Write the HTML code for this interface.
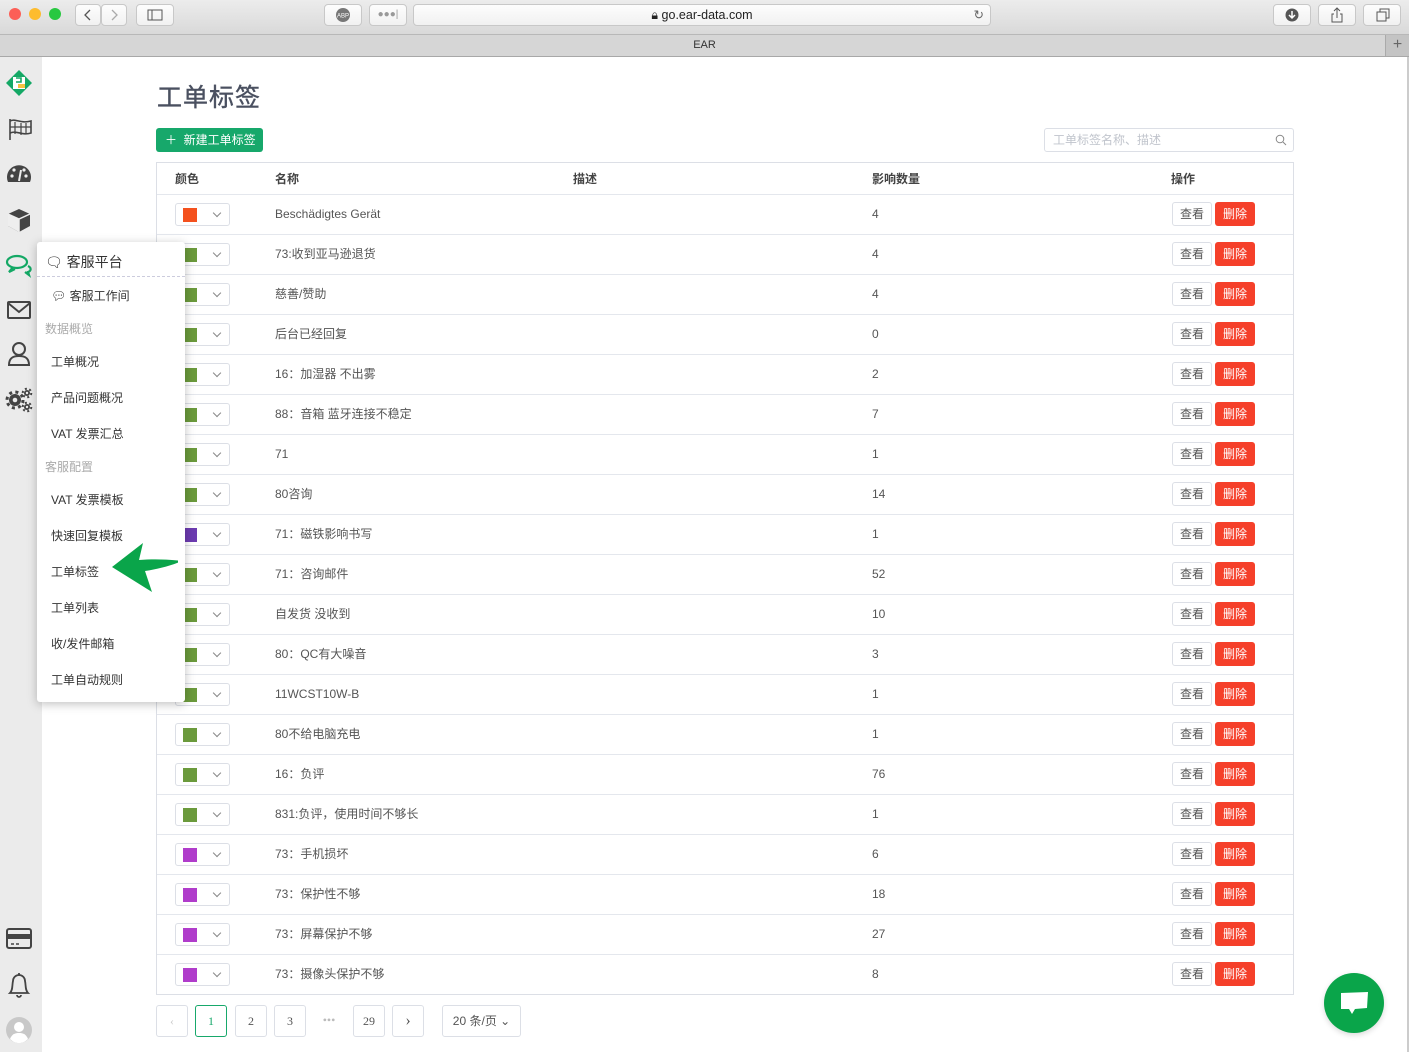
<!DOCTYPE html>
<html><head><meta charset="utf-8"><style>
*{margin:0;padding:0;box-sizing:border-box}
body{width:1409px;height:1052px;overflow:hidden;background:#fff;font-family:"Liberation Sans","Noto Sans CJK SC",sans-serif;color:#444;position:relative;font-size:12px}
.abs{position:absolute}
#top{left:0;top:0;width:1409px;height:34px;background:linear-gradient(#ececec,#d9d9d9)}
#tab{left:0;top:34px;width:1409px;height:23px;background:#d6d6d6;border-top:1px solid #b8b8b8;border-bottom:1px solid #a8a8a8;text-align:center;font-size:11px;line-height:21px;color:#333}
.tb{position:absolute;top:4px;height:22px;background:linear-gradient(#fdfdfd,#f1f1f1);border:1px solid #c8c8c8;border-radius:4px}
.dot{position:absolute;top:8px;width:12px;height:12px;border-radius:6px}
#side{left:0;top:57px;width:42px;height:995px;background:#ebebeb}
#rb{left:1407px;top:57px;width:2px;height:995px;background:#ccc}
h1{position:absolute;left:157px;top:78px;font-size:25px;font-weight:normal;color:#4a5060;letter-spacing:1px;-webkit-text-stroke:0.4px #4a5060}
#add{left:156px;top:128px;width:107px;height:24px;background:#17a86b;border-radius:3px;color:#fff;font-size:12px;line-height:24px;padding-left:9px}
#search{left:1044px;top:128px;width:250px;height:24px;border:1px solid #dcdfe6;border-radius:3px;color:#c0c4cc;font-size:12px;line-height:22px;padding-left:8px}
#tbl{left:156px;top:162px;width:1138px;height:833px;border:1px solid #dcdfe6}
.r{position:absolute;left:0;width:1136px;height:40px;border-top:1px solid #e4e7ed;font-size:12px;line-height:39px;color:#555}
.r span{position:absolute}
.sel{position:absolute;left:18px;top:8px;width:55px;height:23px;border:1px solid #dcdfe6;border-radius:3px}
.sw{position:absolute;left:7px;top:4px;width:14px;height:14px}
.chev{position:absolute;left:38px;top:6px;width:6px;height:6px;border-right:1px solid #888;border-bottom:1px solid #888;transform:rotate(45deg)}
.v{position:absolute;left:1015px;top:7px;width:40px;height:24px;border:1px solid #dcdfe6;border-radius:3px;line-height:22px;text-align:center;color:#555;background:#fff}
.d{position:absolute;left:1058px;top:7px;width:40px;height:24px;background:#f5402a;border-radius:3px;line-height:24px;text-align:center;color:#fff}
.hd{position:absolute;top:0;font-weight:bold;line-height:32px;color:#444}
.pg{position:absolute;top:1005px;width:32px;height:32px;border:1px solid #dcdfe6;border-radius:3px;text-align:center;line-height:30px;font-family:"Liberation Serif",serif;font-size:12px;color:#555}
#menu{left:37px;top:242px;width:148px;height:460px;background:#fff;box-shadow:0 2px 10px rgba(0,0,0,.25);border-radius:3px}
#menu div{position:absolute;left:14px;font-size:12px;color:#333}
#menu .g{color:#aaa;left:8px}
#chat{left:1324px;top:973px;width:60px;height:60px;border-radius:30px;background:#0aa54a;box-shadow:0 2px 6px rgba(0,0,0,.15)}
</style></head><body>
<div id="top" class="abs">
<div class="dot" style="left:9px;background:#fc5f57"></div><div class="dot" style="left:29px;background:#fdbc2e"></div><div class="dot" style="left:49px;background:#28c840"></div>
<div class="tb" style="left:75px;width:26px"><svg width="24" height="20"><path d="M14 5l-5 5 5 5" stroke="#555" fill="none" stroke-width="1.3"/></svg></div>
<div class="tb" style="left:101px;width:26px"><svg width="24" height="20"><path d="M10 5l5 5-5 5" stroke="#aaa" fill="none" stroke-width="1.3"/></svg></div>
<div class="tb" style="left:136px;width:38px"><svg width="36" height="20"><rect x="11" y="5" width="14" height="10" stroke="#555" fill="none"/><line x1="15" y1="5" x2="15" y2="15" stroke="#555"/></svg></div>
<div class="tb" style="left:324px;width:38px"><svg width="36" height="20"><circle cx="18" cy="10" r="7" fill="#777"/><text x="18" y="12.5" font-size="6" fill="#fff" text-anchor="middle" font-family="Liberation Sans">ABP</text></svg></div>
<div class="tb" style="left:369px;width:38px;color:#999;font-size:10px;text-align:center;line-height:19px">●●●|</div>
<div class="tb" style="left:413px;width:578px;text-align:center;line-height:20px;font-size:12.5px;color:#222">🔒︎ go.ear-data.com<span style="position:absolute;right:6px;color:#666">↻</span></div>
<div class="tb" style="left:1273px;width:38px"><svg width="36" height="20"><circle cx="18" cy="10" r="6.5" fill="#555"/><path d="M18 6v6M15 10l3 3 3-3" stroke="#fff" fill="none" stroke-width="1.5"/></svg></div>
<div class="tb" style="left:1318px;width:38px"><svg width="36" height="20"><path d="M15 9h-2v8h10V9h-2M18 13V3M15 6l3-3 3 3" stroke="#555" fill="none"/></svg></div>
<div class="tb" style="left:1363px;width:38px"><svg width="36" height="20"><rect x="13" y="7" width="9" height="9" stroke="#555" fill="none"/><path d="M16 7V4h9v9h-3" stroke="#555" fill="none"/></svg></div>
</div>
<div id="tab" class="abs">EAR<div style="position:absolute;right:0;top:0;width:24px;height:21px;background:#c4c4c4;border-left:1px solid #aaa;font-size:16px;line-height:20px;color:#666">+</div></div>
<div id="side" class="abs">
<svg width="42" height="995" style="position:absolute;left:0;top:0">
<g transform="translate(19,26)"><path d="M0-13L13 0 0 13-13 0z" fill="#14a865"/><rect x="-6" y="-6" width="12" height="12" fill="#fff"/><rect x="-1" y="1" width="7" height="4" fill="#f5c342"/><path d="M-3-5h5v4h-5" stroke="#14a865" fill="none" stroke-width="1.6"/></g>
<g transform="translate(9,62)" stroke="#444" fill="none" stroke-width="1.6"><line x1="1" y1="0" x2="1" y2="21"/><path d="M1 2c6-3 10 3 21 0v12c-9 3-14-3-21 0" /><path d="M6 3v12M12 4v12M17 4v11M1 8h21" stroke-width="1.2"/></g>
<g transform="translate(19,118)"><path d="M-11 7A12 12 0 1 1 11 7Z" fill="#444"/><circle cx="-7" cy="1" r="1.6" fill="#eee"/><circle cx="-5" cy="-5" r="1.6" fill="#eee"/><circle cx="7" cy="1" r="1.6" fill="#eee"/><circle cx="5" cy="-5" r="1.6" fill="#eee"/><path d="M0 6l2-11" stroke="#eee" stroke-width="2"/></g>
<g transform="translate(19,163)"><path d="M0-11l11 5v12L0 12-11 6V-6z" fill="#444"/><path d="M-11-6L0-1 11-6M0-1v13" stroke="#eee" stroke-width="1.5" fill="none"/><path d="M0-1l-11-5v12L0 12z" fill="#eee"/></g>
<g transform="translate(19,207)" stroke="#14a865" fill="none" stroke-width="2.2"><ellipse cx="-2" cy="-2" rx="10" ry="6"/><path d="M-6 3l-4 5 6-3"/><path d="M9 2c4 2 3 5 0 6l1 3-4-3"/></g>
<g transform="translate(19,253)" stroke="#444" fill="none" stroke-width="2"><rect x="-11" y="-8" width="22" height="16" rx="1"/><path d="M-11-7L0 2 11-7"/></g>
<g transform="translate(19,297)" stroke="#444" fill="none" stroke-width="2"><circle cx="0" cy="-5" r="6"/><path d="M-10 11c0-7 4-9 10-9s10 2 10 9z"/></g>
<g transform="translate(15,343)" fill="#444"><circle r="6"/><circle r="8" fill="none" stroke="#444" stroke-width="3" stroke-dasharray="3 3.3"/><circle r="2.3" fill="#ebebeb"/></g>
<g transform="translate(27,336)" fill="#444"><circle r="3"/><circle r="4.3" fill="none" stroke="#444" stroke-width="2" stroke-dasharray="2 2.5"/><circle r="1.2" fill="#ebebeb"/></g>
<g transform="translate(27,350)" fill="#444"><circle r="3"/><circle r="4.3" fill="none" stroke="#444" stroke-width="2" stroke-dasharray="2 2.5"/><circle r="1.2" fill="#ebebeb"/></g>
<g transform="translate(19,882)"><rect x="-12" y="-10" width="24" height="19" rx="2" stroke="#444" stroke-width="2" fill="none"/><rect x="-12" y="-5" width="24" height="5" fill="#444"/><path d="M-8 5h3M-3 5h3" stroke="#444" stroke-width="1.5"/></g>
<g transform="translate(19,927)" stroke="#444" fill="none" stroke-width="1.8"><path d="M-9 9c3-3 2-8 3-12a6 6 0 0 1 12 0c1 4 0 9 3 12z"/><path d="M-2 11a2 2 0 0 0 4 0"/><path d="M0-9v-2"/></g>
<g transform="translate(19,973)"><circle r="13" fill="#c8c8c8"/><circle cy="-3" r="5" fill="#fff"/><path d="M-9 9c2-5 5-6 9-6s7 1 9 6c-3 3-6 4-9 4s-6-1-9-4z" fill="#fff"/></g>
</svg></div>
<div id="rb" class="abs"></div>
<h1>工单标签</h1>
<div id="add" class="abs">＋&nbsp; 新建工单标签</div>
<div id="search" class="abs">工单标签名称、描述<svg width="12" height="12" style="position:absolute;right:6px;top:5px"><circle cx="5" cy="5" r="3.8" stroke="#888" fill="none"/><path d="M8 8l3 3" stroke="#888"/></svg></div>
<div id="tbl" class="abs">
<div class="hd" style="left:18px">颜色</div><div class="hd" style="left:118px">名称</div><div class="hd" style="left:416px">描述</div><div class="hd" style="left:715px">影响数量</div><div class="hd" style="left:1014px">操作</div>
<div class="r" style="top:31px"><div class="sel"><div class="sw" style="background:#f4511e"></div><div class="chev"></div></div><span style="left:118px">Beschädigtes Gerät</span><span style="left:715px">4</span><div class="v">查看</div><div class="d">删除</div></div>
<div class="r" style="top:71px"><div class="sel"><div class="sw" style="background:#6b9a3c"></div><div class="chev"></div></div><span style="left:118px">73:收到亚马逊退货</span><span style="left:715px">4</span><div class="v">查看</div><div class="d">删除</div></div>
<div class="r" style="top:111px"><div class="sel"><div class="sw" style="background:#6b9a3c"></div><div class="chev"></div></div><span style="left:118px">慈善/赞助</span><span style="left:715px">4</span><div class="v">查看</div><div class="d">删除</div></div>
<div class="r" style="top:151px"><div class="sel"><div class="sw" style="background:#6b9a3c"></div><div class="chev"></div></div><span style="left:118px">后台已经回复</span><span style="left:715px">0</span><div class="v">查看</div><div class="d">删除</div></div>
<div class="r" style="top:191px"><div class="sel"><div class="sw" style="background:#6b9a3c"></div><div class="chev"></div></div><span style="left:118px">16：加湿器 不出雾</span><span style="left:715px">2</span><div class="v">查看</div><div class="d">删除</div></div>
<div class="r" style="top:231px"><div class="sel"><div class="sw" style="background:#6b9a3c"></div><div class="chev"></div></div><span style="left:118px">88：音箱 蓝牙连接不稳定</span><span style="left:715px">7</span><div class="v">查看</div><div class="d">删除</div></div>
<div class="r" style="top:271px"><div class="sel"><div class="sw" style="background:#6b9a3c"></div><div class="chev"></div></div><span style="left:118px">71</span><span style="left:715px">1</span><div class="v">查看</div><div class="d">删除</div></div>
<div class="r" style="top:311px"><div class="sel"><div class="sw" style="background:#6b9a3c"></div><div class="chev"></div></div><span style="left:118px">80咨询</span><span style="left:715px">14</span><div class="v">查看</div><div class="d">删除</div></div>
<div class="r" style="top:351px"><div class="sel"><div class="sw" style="background:#6c3bb0"></div><div class="chev"></div></div><span style="left:118px">71：磁铁影响书写</span><span style="left:715px">1</span><div class="v">查看</div><div class="d">删除</div></div>
<div class="r" style="top:391px"><div class="sel"><div class="sw" style="background:#6b9a3c"></div><div class="chev"></div></div><span style="left:118px">71：咨询邮件</span><span style="left:715px">52</span><div class="v">查看</div><div class="d">删除</div></div>
<div class="r" style="top:431px"><div class="sel"><div class="sw" style="background:#6b9a3c"></div><div class="chev"></div></div><span style="left:118px">自发货 没收到</span><span style="left:715px">10</span><div class="v">查看</div><div class="d">删除</div></div>
<div class="r" style="top:471px"><div class="sel"><div class="sw" style="background:#6b9a3c"></div><div class="chev"></div></div><span style="left:118px">80：QC有大噪音</span><span style="left:715px">3</span><div class="v">查看</div><div class="d">删除</div></div>
<div class="r" style="top:511px"><div class="sel"><div class="sw" style="background:#6b9a3c"></div><div class="chev"></div></div><span style="left:118px">11WCST10W-B</span><span style="left:715px">1</span><div class="v">查看</div><div class="d">删除</div></div>
<div class="r" style="top:551px"><div class="sel"><div class="sw" style="background:#6b9a3c"></div><div class="chev"></div></div><span style="left:118px">80不给电脑充电</span><span style="left:715px">1</span><div class="v">查看</div><div class="d">删除</div></div>
<div class="r" style="top:591px"><div class="sel"><div class="sw" style="background:#6b9a3c"></div><div class="chev"></div></div><span style="left:118px">16：负评</span><span style="left:715px">76</span><div class="v">查看</div><div class="d">删除</div></div>
<div class="r" style="top:631px"><div class="sel"><div class="sw" style="background:#6b9a3c"></div><div class="chev"></div></div><span style="left:118px">831:负评，使用时间不够长</span><span style="left:715px">1</span><div class="v">查看</div><div class="d">删除</div></div>
<div class="r" style="top:671px"><div class="sel"><div class="sw" style="background:#b03ccb"></div><div class="chev"></div></div><span style="left:118px">73：手机损坏</span><span style="left:715px">6</span><div class="v">查看</div><div class="d">删除</div></div>
<div class="r" style="top:711px"><div class="sel"><div class="sw" style="background:#b03ccb"></div><div class="chev"></div></div><span style="left:118px">73：保护性不够</span><span style="left:715px">18</span><div class="v">查看</div><div class="d">删除</div></div>
<div class="r" style="top:751px"><div class="sel"><div class="sw" style="background:#b03ccb"></div><div class="chev"></div></div><span style="left:118px">73：屏幕保护不够</span><span style="left:715px">27</span><div class="v">查看</div><div class="d">删除</div></div>
<div class="r" style="top:791px"><div class="sel"><div class="sw" style="background:#b03ccb"></div><div class="chev"></div></div><span style="left:118px">73：摄像头保护不够</span><span style="left:715px">8</span><div class="v">查看</div><div class="d">删除</div></div>
</div>
<div class="pg" style="left:156px;color:#ccc">‹</div>
<div class="pg" style="left:195px;border-color:#17a86b;color:#17a86b">1</div>
<div class="pg" style="left:235px">2</div>
<div class="pg" style="left:274px">3</div>
<div class="pg" style="left:313px;border:none;color:#bbb">•••</div>
<div class="pg" style="left:353px">29</div>
<div class="pg" style="left:392px;font-size:16px">›</div>
<div class="pg" style="left:442px;width:79px;font-family:'Liberation Sans','Noto Sans CJK SC',sans-serif">20 条/页 ⌄</div>
<div id="menu" class="abs">
<div style="left:8px;top:10px;font-size:14px">🗨︎ 客服平台</div>
<div style="left:0;top:34px;width:148px;border-top:1px dashed #ccd"></div>
<div style="top:45px">💬︎ 客服工作间</div>
<div class="g" style="top:78px">数据概览</div>
<div style="top:111px">工单概况</div>
<div style="top:147px">产品问题概况</div>
<div style="top:183px">VAT 发票汇总</div>
<div class="g" style="top:216px">客服配置</div>
<div style="top:249px">VAT 发票模板</div>
<div style="top:285px">快速回复模板</div>
<div style="top:321px">工单标签</div>
<div style="top:357px">工单列表</div>
<div style="top:393px">收/发件邮箱</div>
<div style="top:429px">工单自动规则</div>
</div>
<svg class="abs" style="left:108px;top:540px" width="70" height="52"><path d="M4 27L35 3l-4 17c13-1 26-1 43 1-12 5-24 8-37 10l7 21z" fill="#0aa54a"/></svg>
<div id="chat" class="abs"><svg width="60" height="60"><path d="M17 20l27-1-1 16-12 1-3 5-3-5-8 0z" fill="#fff"/></svg></div>
</body></html>
